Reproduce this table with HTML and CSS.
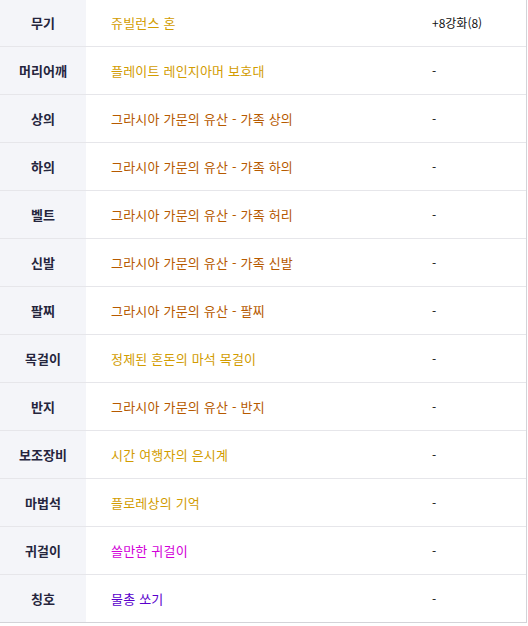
FILE: index.html
```html
<!DOCTYPE html>
<html lang="ko">
<head>
<meta charset="utf-8">
<link rel="stylesheet" href="styles.css">
</head>
<body>
<div class="table">
  <div class="row"><div class="label">무기</div><div class="name c-gold">쥬빌런스 혼</div><div class="extra">+8강화(8)</div></div>
  <div class="row"><div class="label">머리어깨</div><div class="name c-gold">플레이트 레인지아머 보호대</div><div class="extra">-</div></div>
  <div class="row"><div class="label">상의</div><div class="name c-orange">그라시아 가문의 유산 - 가족 상의</div><div class="extra">-</div></div>
  <div class="row"><div class="label">하의</div><div class="name c-orange">그라시아 가문의 유산 - 가족 하의</div><div class="extra">-</div></div>
  <div class="row"><div class="label">벨트</div><div class="name c-orange">그라시아 가문의 유산 - 가족 허리</div><div class="extra">-</div></div>
  <div class="row"><div class="label">신발</div><div class="name c-orange">그라시아 가문의 유산 - 가족 신발</div><div class="extra">-</div></div>
  <div class="row"><div class="label">팔찌</div><div class="name c-orange">그라시아 가문의 유산 - 팔찌</div><div class="extra">-</div></div>
  <div class="row"><div class="label">목걸이</div><div class="name c-gold">정제된 혼돈의 마석 목걸이</div><div class="extra">-</div></div>
  <div class="row"><div class="label">반지</div><div class="name c-orange">그라시아 가문의 유산 - 반지</div><div class="extra">-</div></div>
  <div class="row"><div class="label">보조장비</div><div class="name c-gold">시간 여행자의 은시계</div><div class="extra">-</div></div>
  <div class="row"><div class="label">마법석</div><div class="name c-gold">플로레상의 기억</div><div class="extra">-</div></div>
  <div class="row"><div class="label">귀걸이</div><div class="name c-magenta">쓸만한 귀걸이</div><div class="extra">-</div></div>
  <div class="row last"><div class="label">칭호</div><div class="name c-purple">물총 쏘기</div><div class="extra">-</div></div>
</div>
</body>
</html>
```

FILE: styles.css
```css
html, body {
  margin: 0;
  padding: 0;
  background: #ffffff;
}
body {
  font-family: "Noto Sans CJK KR", "Noto Sans", sans-serif;
  font-size: 12px;
}
.table {
  width: 526px;
  margin-top: -2px;
  border-right: 1px solid #d3d3d8;
  border-bottom: 1px solid #d3d3d8;
}
.row {
  display: grid;
  grid-template-columns: 86px 321px 1fr;
  height: 47px;
  border-top: 1px solid #e6e6ea;
  align-items: stretch;
}
.label {
  background: #f4f5f9;
  display: flex;
  align-items: center;
  justify-content: center;
  font-weight: bold;
  color: #25253d;
  font-size: 13px;
}
.name, .extra {
  display: flex;
  align-items: center;
  padding-left: 25px;
}
.name {
  font-size: 13px;
  letter-spacing: 0.2px;
}
.extra {
  color: #111111;
}
.c-gold { color: #d29c00; }
.c-orange { color: #b65a00; }
.c-magenta { color: #d200d8; }
.c-purple { color: #5a00cc; }
```
